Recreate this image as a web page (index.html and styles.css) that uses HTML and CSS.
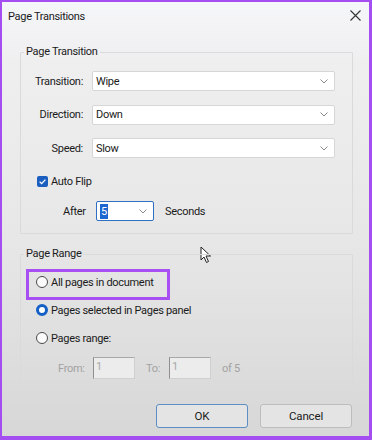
FILE: index.html
```html
<!DOCTYPE html>
<html>
<head>
<meta charset="utf-8">
<link rel="stylesheet" href="styles.css">
</head>
<body>
<div class="window">
  <div class="titlebar">
    <span class="title">Page Transitions</span>
    <svg class="close" width="11" height="11" viewBox="0 0 11 11"><path d="M0.5 0.5 L10.5 10.5 M10.5 0.5 L0.5 10.5" stroke="#333" stroke-width="1.1" fill="none"/></svg>
  </div>
  <div class="content">
    <fieldset class="group group-transition">
      <legend>Page Transition</legend>
      <div class="row">
        <span class="label">Transition:</span>
        <div class="select wide"><span>Wipe</span><svg class="chev" width="8" height="5" viewBox="0 0 8 5"><path d="M0.5 0.5 L4 4 L7.5 0.5" stroke="#8a8a8a" fill="none" stroke-width="1"/></svg></div>
      </div>
      <div class="row">
        <span class="label">Direction:</span>
        <div class="select wide"><span>Down</span><svg class="chev" width="8" height="5" viewBox="0 0 8 5"><path d="M0.5 0.5 L4 4 L7.5 0.5" stroke="#8a8a8a" fill="none" stroke-width="1"/></svg></div>
      </div>
      <div class="row">
        <span class="label">Speed:</span>
        <div class="select wide"><span>Slow</span><svg class="chev" width="8" height="5" viewBox="0 0 8 5"><path d="M0.5 0.5 L4 4 L7.5 0.5" stroke="#8a8a8a" fill="none" stroke-width="1"/></svg></div>
      </div>
      <div class="check-row">
        <span class="checkbox"><svg width="11" height="11" viewBox="0 0 11 11"><path d="M2.6 5.6 L4.6 7.6 L8.4 3.6" stroke="#fff" stroke-width="1.3" fill="none"/></svg></span>
        <span>Auto Flip</span>
      </div>
      <div class="after-row">
        <span class="after-label">After</span>
        <div class="select small focused"><span class="sel-text">5</span><svg class="chev" width="8" height="5" viewBox="0 0 8 5"><path d="M0.5 0.5 L4 4 L7.5 0.5" stroke="#8a8a8a" fill="none" stroke-width="1"/></svg></div>
        <span>Seconds</span>
      </div>
    </fieldset>

    <div class="cursor-gap">
      <svg class="cursor" width="12" height="18" viewBox="0 0 12 18"><path d="M1 1 L1 14 L4 11 L6.5 16.5 L8.5 15.5 L6 10 L10.5 10 Z" fill="#fff" stroke="#222" stroke-width="1" stroke-linejoin="round"/></svg>
    </div>

    <fieldset class="group group-range">
      <legend>Page Range</legend>
      <div class="highlight"></div>
      <div class="radio-row first">
        <span class="radio"></span><span>All pages in document</span>
      </div>
      <div class="radio-row">
        <span class="radio checked"></span><span>Pages selected in Pages panel</span>
      </div>
      <div class="radio-row">
        <span class="radio"></span><span>Pages range:</span>
      </div>
      <div class="range-row">
        <span class="from">From:</span>
        <div class="field">1</div>
        <span class="to">To:</span>
        <div class="field">1</div>
        <span class="of">of 5</span>
      </div>
    </fieldset>

    <div class="buttons">
      <button class="btn default">OK</button>
      <button class="btn">Cancel</button>
    </div>
  </div>
</div>
</body>
</html>
```
FILE: styles.css
```css
html, body {
  margin: 0;
  padding: 0;
}
body {
  width: 372px;
  height: 440px;
  overflow: hidden;
  font-family: Roboto, "Liberation Sans", sans-serif;
  font-size: 11px;
  letter-spacing: -0.3px;
  color: #1b1b1b;
}
.window {
  box-sizing: border-box;
  width: 372px;
  height: 440px;
  border: 2px solid #a44ef2;
  border-right-width: 3px;
  border-bottom-width: 4px;
  background: linear-gradient(to bottom, #f5f6f9 0px, #efeff0 60px, #e6e6e6 250px, #d7d7d7 434px);
  display: flex;
  flex-direction: column;
}
.titlebar {
  height: 28px;
  display: flex;
  align-items: center;
  justify-content: space-between;
  padding: 0 8px 0 6px;
}
.close {
  margin-top: -2px;
}
.content {
  padding: 14px 16px 0 18px;
  display: flex;
  flex-direction: column;
}
.group {
  margin: 0;
  padding: 0;
  border: 1px solid #dadada;
  border-radius: 1px;
  min-width: 0;
}
.group legend {
  margin-left: 3px;
  padding: 0 2px;
  line-height: 16px;
}
.group-transition {
  padding-bottom: 12px;
}
.row {
  display: flex;
  align-items: center;
  height: 20px;
  margin-top: 13.5px;
}
.row:first-of-type {
  margin-top: 11px;
}
.label {
  width: 62px;
  text-align: right;
  margin-right: 9px;
}
.select {
  box-sizing: border-box;
  height: 20px;
  background: #fff;
  border: 1px solid #d6d6d6;
  border-radius: 2px;
  display: flex;
  align-items: center;
  justify-content: space-between;
  padding: 0 6px 0 3px;
}
.select.wide {
  width: 243px;
}
.select.small {
  width: 58px;
}
.select.focused {
  border-color: #2f6fc4;
}
.sel-text {
  background: #1e66d0;
  color: #fff;
  padding: 0 1px;
  line-height: 15px;
}
.chev {
  display: block;
}
.check-row {
  display: flex;
  align-items: center;
  margin-top: 17px;
  margin-left: 16px;
  height: 12px;
}
.checkbox {
  width: 11px;
  height: 11px;
  border-radius: 2px;
  background: #1a5fbf;
  margin-right: 3px;
  display: flex;
}
.after-row {
  display: flex;
  align-items: center;
  margin-top: 14px;
  margin-left: 42px;
  height: 20px;
}
.after-label {
  width: 33px;
}
.after-row .select {
  margin-right: 11px;
}
.cursor-gap {
  height: 12px;
  position: relative;
}
.cursor {
  position: absolute;
  left: 180px;
  top: 12px;
}
.group-range {
  position: relative;
  padding-bottom: 12px;
}
.highlight {
  position: absolute;
  left: 5px;
  top: 7px;
  width: 138px;
  height: 25px;
  border: 3px solid #a74ff3;
}
.radio-row {
  display: flex;
  align-items: center;
  height: 16px;
  margin-top: 12px;
  margin-left: 15px;
}
.radio {
  box-sizing: border-box;
  width: 12px;
  height: 12px;
  border-radius: 50%;
  border: 1px solid #4a4a4a;
  margin-right: 3px;
  background: #fbfbfb;
}
.radio.checked {
  border: 3.5px solid #1560c6;
  background: #fff;
}
.range-row {
  display: flex;
  align-items: center;
  height: 22px;
  margin-top: 11px;
  margin-left: 37px;
  color: #a2a2a2;
}
.field {
  box-sizing: border-box;
  width: 42px;
  height: 22px;
  border: 1px solid #cfcfcf;
  border-left-color: #8f8f8f;
  border-top-color: #a8a8a8;
  padding: 0 2px;
  line-height: 18px;
  color: #a8a8a8;
  background: #ececec;
}
.from {
  width: 35px;
}
.to {
  width: 23px;
  margin-left: 11px;
}
.of {
  margin-left: 11px;
}
.buttons {
  display: flex;
  justify-content: flex-end;
  gap: 12px;
  margin-top: 12px;
  padding-right: 1px;
}
.btn {
  box-sizing: border-box;
  width: 92px;
  height: 24px;
  font-family: inherit;
  font-size: 11.5px;
  letter-spacing: -0.15px;
  color: #1b1b1b;
  background: #e4e4e4;
  border: 1px solid #bdbdbd;
  border-radius: 3px;
  padding: 0;
}
.btn.default {
  border-color: #5d8fc4;
}
```
